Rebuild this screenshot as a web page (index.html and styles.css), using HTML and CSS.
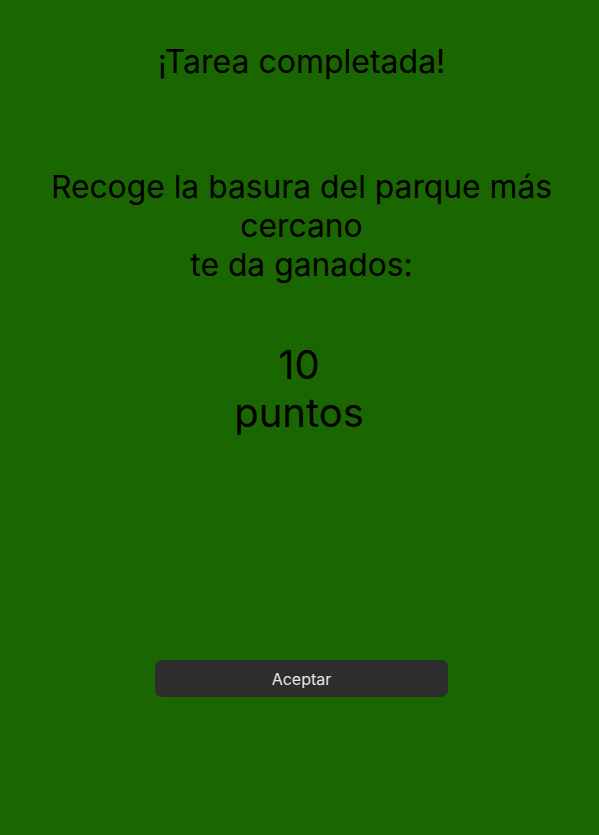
FILE: index.html
```html
<!DOCTYPE html>
<html lang="es">
<head>
<meta charset="utf-8">
<title>Tarea completada</title>
<link rel="stylesheet" href="styles.css">
</head>
<body>
<main class="screen">
  <h1 class="title">¡Tarea completada!</h1>
  <p class="message">Recoge la basura del parque más cercano<br>te da ganados:</p>
  <p class="points">10<br>puntos</p>
  <button class="accept">Aceptar</button>
</main>
</body>
</html>
```

FILE: styles.css
```css
html, body {
  margin: 0;
  padding: 0;
  background: #1a6600;
}
.screen {
  box-sizing: border-box;
  width: 599px;
  height: 835px;
  padding-left: 4px;
  display: flex;
  flex-direction: column;
  align-items: center;
  font-family: Inter, "Noto Sans", sans-serif;
  color: #000;
  text-align: center;
}
.title {
  margin: 42px 0 0;
  font-size: 32px;
  font-weight: 400;
  line-height: 39px;
}
.message {
  margin: 86px 0 0;
  width: 540px;
  font-size: 31.8px;
  line-height: 39px;
}
.points {
  margin: 57px 0 0 -5px;
  font-size: 40px;
  line-height: 48px;
}
.accept {
  margin: 223px 0 0;
  width: 293px;
  height: 37px;
  border: none;
  border-radius: 7px;
  background: #2d2d2d;
  color: #e6e6e6;
  font-family: Inter, "Noto Sans", sans-serif;
  font-size: 16px;
}
```
